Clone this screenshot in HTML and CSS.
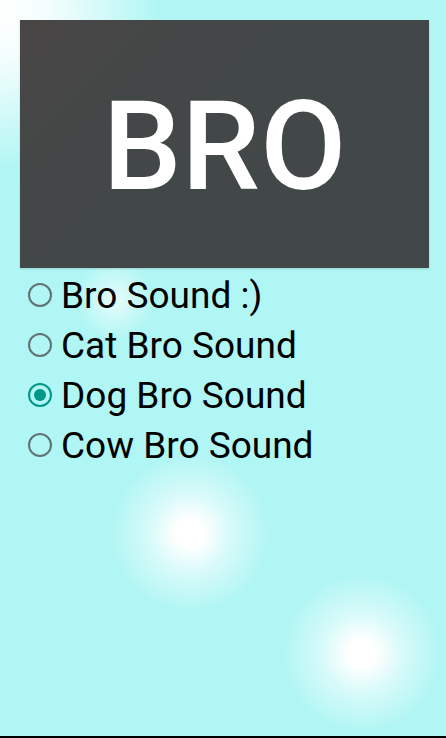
FILE: index.html
```html
<!DOCTYPE html>
<html lang="en">

<head>
    <meta charset="UTF-8">
    <meta name="viewport" content="width=device-width, initial-scale=1.0">
    <title>Bro Sounds</title>
    <link rel="stylesheet" href="styles.css">
</head>

<body>
    <div class="banner">
        <span class="banner-text">BRO</span>
    </div>

    <form class="sounds">
        <label class="sound">
            <input type="radio" name="sound" value="bro">
            <span class="dot"></span>
            <span class="sound-name">Bro Sound :)</span>
        </label>
        <label class="sound">
            <input type="radio" name="sound" value="cat">
            <span class="dot"></span>
            <span class="sound-name">Cat Bro Sound</span>
        </label>
        <label class="sound">
            <input type="radio" name="sound" value="dog" checked>
            <span class="dot"></span>
            <span class="sound-name">Dog Bro Sound</span>
        </label>
        <label class="sound">
            <input type="radio" name="sound" value="cow">
            <span class="dot"></span>
            <span class="sound-name">Cow Bro Sound</span>
        </label>
    </form>
</body>

</html>
```

FILE: styles.css
```css
html {
    height: 100%;
}

body {
    box-sizing: border-box;
    height: 100%;
    margin: 0;
    padding: 20px 17px 0 20px;
    font-family: Roboto, "Noto Sans", sans-serif;
    border-bottom: 2px solid #000;
    background-color: #b0f6f4;
    background-image:
        radial-gradient(circle at 0 10px, #ffffff 0, rgba(255,255,255,0.85) 50px, rgba(255,255,255,0) 160px),
        radial-gradient(circle at 115px 300px, rgba(255,255,255,0.7) 0, rgba(255,255,255,0) 40px),
        radial-gradient(circle at 190px 533px, #ffffff 0, #ffffff 14px, rgba(255,255,255,0.5) 40px, rgba(255,255,255,0) 80px),
        radial-gradient(circle at 362px 653px, #ffffff 0, #ffffff 14px, rgba(255,255,255,0.5) 40px, rgba(255,255,255,0) 80px);
}

.banner {
    height: 248px;
    display: flex;
    align-items: center;
    justify-content: center;
    background: linear-gradient(135deg, #4a4646 0, #434747 30%, #424747 100%);
    box-shadow: 0 1px 2px rgba(0,0,0,0.15);
}

.banner-text {
    color: #fff;
    font-size: 125px;
    font-weight: 500;
    line-height: 1;
    margin-top: 4px;
}

.sounds {
    display: flex;
    flex-direction: column;
    padding-top: 2px;
}

.sound {
    display: flex;
    align-items: center;
    height: 50px;
    cursor: pointer;
}

.sound input {
    display: none;
}

.dot {
    box-sizing: border-box;
    width: 24px;
    height: 24px;
    margin: 0 9px 0 8px;
    border: 2.5px solid #617272;
    border-radius: 50%;
    display: flex;
    align-items: center;
    justify-content: center;
}

.sound input:checked + .dot {
    border-color: #009688;
}

.sound input:checked + .dot::after {
    content: "";
    width: 12px;
    height: 12px;
    border-radius: 50%;
    background-color: #009688;
}

.sound-name {
    font-size: 37px;
    color: #000;
}
```
